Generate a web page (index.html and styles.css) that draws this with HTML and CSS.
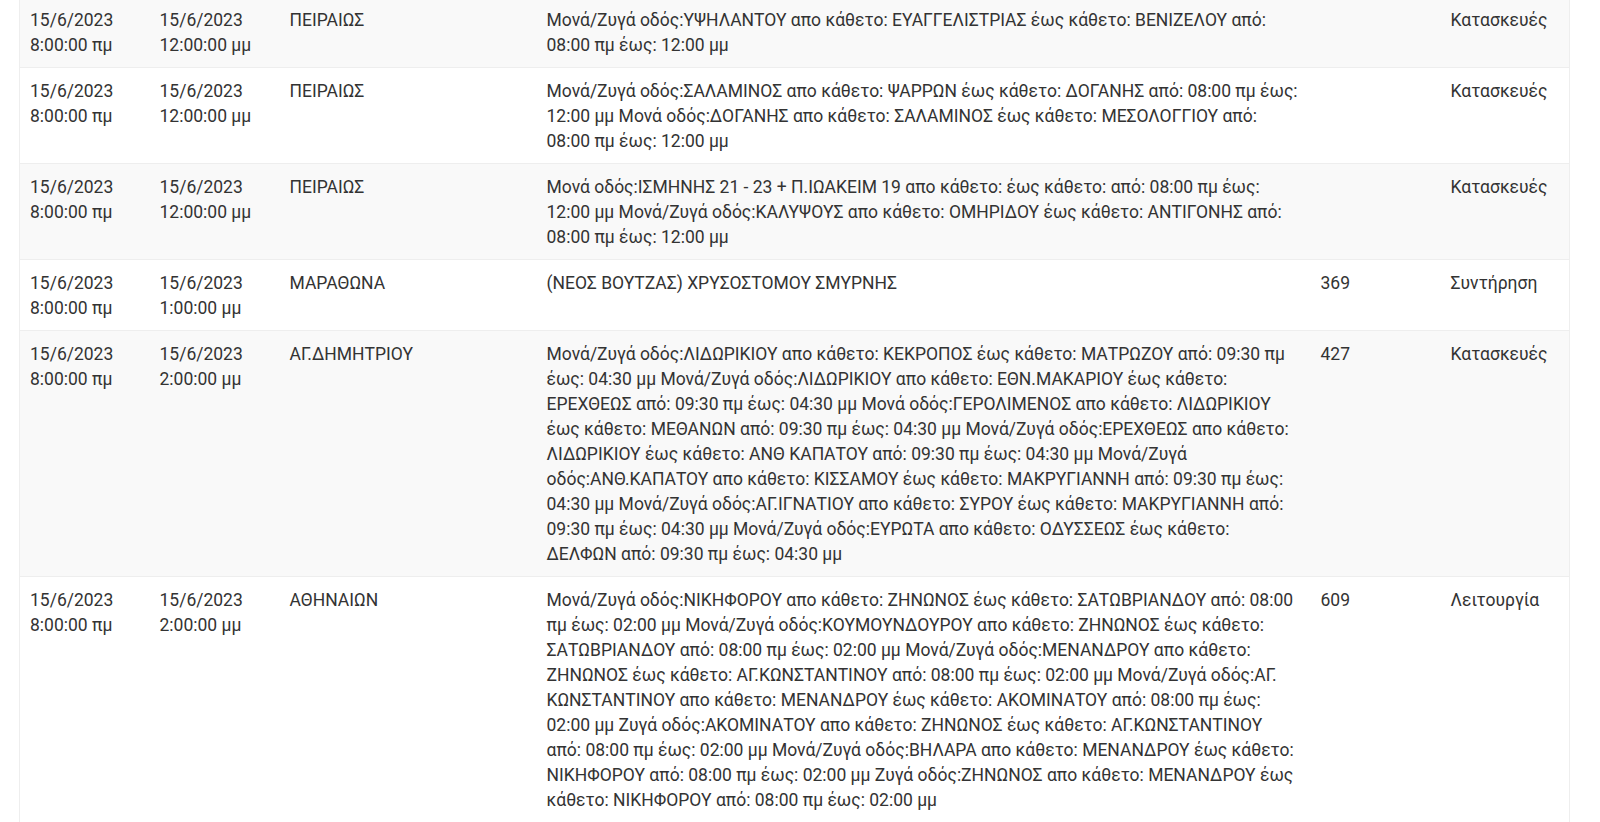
FILE: index.html
```html
<!DOCTYPE html>
<html lang="el">
<head>
  <meta charset="UTF-8" />
  <title>Διακοπές ρεύματος</title>
  <link rel="stylesheet" href="styles.css">
</head>
<body>

  <table class="outages">
    <colgroup>
      <col class="c-date">
      <col class="c-date">
      <col class="c-area">
      <col class="c-desc">
      <col class="c-num">
      <col class="c-type">
    </colgroup>
    <tbody>
      <tr>
        <td>15/6/2023 8:00:00 πμ</td>
        <td>15/6/2023 12:00:00 μμ</td>
        <td>ΠΕΙΡΑΙΩΣ</td>
        <td>Μονά/Ζυγά οδός:ΥΨΗΛΑΝΤΟΥ απο κάθετο: ΕΥΑΓΓΕΛΙΣΤΡΙΑΣ έως κάθετο: ΒΕΝΙΖΕΛΟΥ από: 08:00 πμ έως: 12:00 μμ</td>
        <td></td>
        <td>Κατασκευές</td>
      </tr>
      <tr>
        <td>15/6/2023 8:00:00 πμ</td>
        <td>15/6/2023 12:00:00 μμ</td>
        <td>ΠΕΙΡΑΙΩΣ</td>
        <td>Μονά/Ζυγά οδός:ΣΑΛΑΜΙΝΟΣ απο κάθετο: ΨΑΡΡΩΝ έως κάθετο: ΔΟΓΑΝΗΣ από: 08:00 πμ έως: 12:00 μμ Μονά οδός:ΔΟΓΑΝΗΣ απο κάθετο: ΣΑΛΑΜΙΝΟΣ έως κάθετο: ΜΕΣΟΛΟΓΓΙΟΥ από: 08:00 πμ έως: 12:00 μμ</td>
        <td></td>
        <td>Κατασκευές</td>
      </tr>
      <tr>
        <td>15/6/2023 8:00:00 πμ</td>
        <td>15/6/2023 12:00:00 μμ</td>
        <td>ΠΕΙΡΑΙΩΣ</td>
        <td>Μονά οδός:ΙΣΜΗΝΗΣ 21 - 23 + Π.ΙΩΑΚΕΙΜ 19 απο κάθετο: έως κάθετο: από: 08:00 πμ έως: 12:00 μμ Μονά/Ζυγά οδός:ΚΑΛΥΨΟΥΣ απο κάθετο: ΟΜΗΡΙΔΟΥ έως κάθετο: ΑΝΤΙΓΟΝΗΣ από: 08:00 πμ έως: 12:00 μμ</td>
        <td></td>
        <td>Κατασκευές</td>
      </tr>
      <tr>
        <td>15/6/2023 8:00:00 πμ</td>
        <td>15/6/2023 1:00:00 μμ</td>
        <td>ΜΑΡΑΘΩΝΑ</td>
        <td>(ΝΕΟΣ ΒΟΥΤΖΑΣ) ΧΡΥΣΟΣΤΟΜΟΥ ΣΜΥΡΝΗΣ</td>
        <td>369</td>
        <td>Συντήρηση</td>
      </tr>
      <tr>
        <td>15/6/2023 8:00:00 πμ</td>
        <td>15/6/2023 2:00:00 μμ</td>
        <td>ΑΓ.ΔΗΜΗΤΡΙΟΥ</td>
        <td>Μονά/Ζυγά οδός:ΛΙΔΩΡΙΚΙΟΥ απο κάθετο: ΚΕΚΡΟΠΟΣ έως κάθετο: ΜΑΤΡΩΖΟΥ από: 09:30 πμ έως: 04:30 μμ Μονά/Ζυγά οδός:ΛΙΔΩΡΙΚΙΟΥ απο κάθετο: ΕΘΝ.ΜΑΚΑΡΙΟΥ έως κάθετο: ΕΡΕΧΘΕΩΣ από: 09:30 πμ έως: 04:30 μμ Μονά οδός:ΓΕΡΟΛΙΜΕΝΟΣ απο κάθετο: ΛΙΔΩΡΙΚΙΟΥ έως κάθετο: ΜΕΘΑΝΩΝ από: 09:30 πμ έως: 04:30 μμ Μονά/Ζυγά οδός:ΕΡΕΧΘΕΩΣ απο κάθετο: ΛΙΔΩΡΙΚΙΟΥ έως κάθετο: ΑΝΘ ΚΑΠΑΤΟΥ από: 09:30 πμ έως: 04:30 μμ Μονά/Ζυγά οδός:ΑΝΘ.ΚΑΠΑΤΟΥ απο κάθετο: ΚΙΣΣΑΜΟΥ έως κάθετο: ΜΑΚΡΥΓΙΑΝΝΗ από: 09:30 πμ έως: 04:30 μμ Μονά/Ζυγά οδός:ΑΓ.ΙΓΝΑΤΙΟΥ απο κάθετο: ΣΥΡΟΥ έως κάθετο: ΜΑΚΡΥΓΙΑΝΝΗ από: 09:30 πμ έως: 04:30 μμ Μονά/Ζυγά οδός:ΕΥΡΩΤΑ απο κάθετο: ΟΔΥΣΣΕΩΣ έως κάθετο: ΔΕΛΦΩΝ από: 09:30 πμ έως: 04:30 μμ</td>
        <td>427</td>
        <td>Κατασκευές</td>
      </tr>
      <tr>
        <td>15/6/2023 8:00:00 πμ</td>
        <td>15/6/2023 2:00:00 μμ</td>
        <td>ΑΘΗΝΑΙΩΝ</td>
        <td>Μονά/Ζυγά οδός:ΝΙΚΗΦΟΡΟΥ απο κάθετο: ΖΗΝΩΝΟΣ έως κάθετο: ΣΑΤΩΒΡΙΑΝΔΟΥ από: 08:00 πμ έως: 02:00 μμ Μονά/Ζυγά οδός:ΚΟΥΜΟΥΝΔΟΥΡΟΥ απο κάθετο: ΖΗΝΩΝΟΣ έως κάθετο: ΣΑΤΩΒΡΙΑΝΔΟΥ από: 08:00 πμ έως: 02:00 μμ Μονά/Ζυγά οδός:ΜΕΝΑΝΔΡΟΥ απο κάθετο: ΖΗΝΩΝΟΣ έως κάθετο: ΑΓ.ΚΩΝΣΤΑΝΤΙΝΟΥ από: 08:00 πμ έως: 02:00 μμ Μονά/Ζυγά οδός:ΑΓ. ΚΩΝΣΤΑΝΤΙΝΟΥ απο κάθετο: ΜΕΝΑΝΔΡΟΥ έως κάθετο: ΑΚΟΜΙΝΑΤΟΥ από: 08:00 πμ έως: 02:00 μμ Ζυγά οδός:ΑΚΟΜΙΝΑΤΟΥ απο κάθετο: ΖΗΝΩΝΟΣ έως κάθετο: ΑΓ.ΚΩΝΣΤΑΝΤΙΝΟΥ από: 08:00 πμ έως: 02:00 μμ Μονά/Ζυγά οδός:ΒΗΛΑΡΑ απο κάθετο: ΜΕΝΑΝΔΡΟΥ έως κάθετο: ΝΙΚΗΦΟΡΟΥ από: 08:00 πμ έως: 02:00 μμ Ζυγά οδός:ΖΗΝΩΝΟΣ απο κάθετο: ΜΕΝΑΝΔΡΟΥ έως κάθετο: ΝΙΚΗΦΟΡΟΥ από: 08:00 πμ έως: 02:00 μμ</td>
        <td>609</td>
        <td>Λειτουργία</td>
      </tr>
    </tbody>
  </table>

</body>
</html>
```

FILE: styles.css
```css
body {
  margin: 0;
  background: #fff;
  font-family: Roboto, "Noto Sans", Arial, sans-serif;
  font-size: 17.5px;
  line-height: 25px;
  color: #333;
}

.outages {
  width: 1550px;
  margin: -4px 0 0 19px;
  border-collapse: collapse;
  table-layout: fixed;
  border-left: 1px solid #eee;
  border-right: 1px solid #eee;
}

.c-date { width: 130px; }
.c-area { width: 257px; }
.c-desc { width: 774px; }
.c-num { width: 130px; }
.c-type { width: 129px; }

.outages td {
  vertical-align: top;
  padding: 11px 10px 9px;
  border-top: 1px solid #eee;
}

.outages tr:nth-child(odd) { background: #f9f9f9; }
```
